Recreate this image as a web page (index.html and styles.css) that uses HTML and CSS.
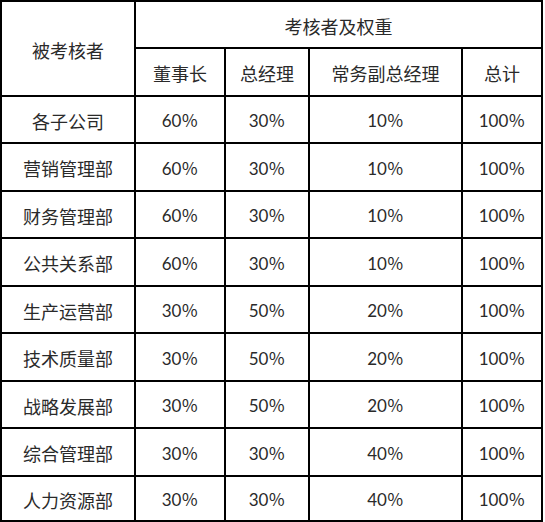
FILE: index.html
```html
<!DOCTYPE html>
<html lang="zh">
<head>
<meta charset="utf-8">
<title>考核者及权重</title>
<link rel="stylesheet" href="styles.css">
</head>
<body>
<table class="weights">
  <colgroup>
    <col class="c1"><col class="c2"><col class="c3"><col class="c4"><col class="c5">
  </colgroup>
  <thead>
    <tr class="h1">
      <th rowspan="2">被考核者</th>
      <th colspan="4">考核者及权重</th>
    </tr>
    <tr class="h2">
      <th>董事长</th>
      <th>总经理</th>
      <th>常务副总经理</th>
      <th>总计</th>
    </tr>
  </thead>
  <tbody>
    <tr><td>各子公司</td><td class="n">60％</td><td class="n">30％</td><td class="n">10％</td><td class="n">100％</td></tr>
    <tr><td>营销管理部</td><td class="n">60％</td><td class="n">30％</td><td class="n">10％</td><td class="n">100％</td></tr>
    <tr><td>财务管理部</td><td class="n">60％</td><td class="n">30％</td><td class="n">10％</td><td class="n">100％</td></tr>
    <tr><td>公共关系部</td><td class="n">60％</td><td class="n">30％</td><td class="n">10％</td><td class="n">100％</td></tr>
    <tr><td>生产运营部</td><td class="n">30％</td><td class="n">50％</td><td class="n">20％</td><td class="n">100％</td></tr>
    <tr><td>技术质量部</td><td class="n">30％</td><td class="n">50％</td><td class="n">20％</td><td class="n">100％</td></tr>
    <tr><td>战略发展部</td><td class="n">30％</td><td class="n">50％</td><td class="n">20％</td><td class="n">100％</td></tr>
    <tr><td>综合管理部</td><td class="n">30％</td><td class="n">30％</td><td class="n">40％</td><td class="n">100％</td></tr>
    <tr class="last"><td>人力资源部</td><td class="n">30％</td><td class="n">30％</td><td class="n">40％</td><td class="n">100％</td></tr>
  </tbody>
</table>
</body>
</html>
```

FILE: styles.css
```css
html, body {
  margin: 0;
  padding: 0;
  background: #fff;
}

.weights {
  border-collapse: separate;
  border-spacing: 0;
  table-layout: fixed;
  width: 543px;
  border-top: 2px solid #000;
  border-left: 2px solid #000;
  font-family: "Noto Sans CJK SC", sans-serif;
  font-size: 18px;
  color: #2a2a2a;
}

.c1 { width: 134px; }
.c2 { width: 90px; }
.c3 { width: 84px; }
.c4 { width: 153px; }
.c5 { width: 80px; }

.weights th,
.weights td {
  border-right: 2px solid #000;
  border-bottom: 2px solid #000;
  padding: 2px 0 0;
  text-align: center;
  vertical-align: middle;
  font-weight: normal;
  line-height: 1;
  box-sizing: border-box;
}

.h1 { height: 47px; }
.h2 { height: 48px; }

tbody tr { height: 47px; }
tbody tr:nth-child(even) { height: 48px; }
tbody tr.last { height: 45px; }

.n {
  font-family: "Lato", "Noto Sans CJK SC", sans-serif;
  font-size: 17px;
}
```
